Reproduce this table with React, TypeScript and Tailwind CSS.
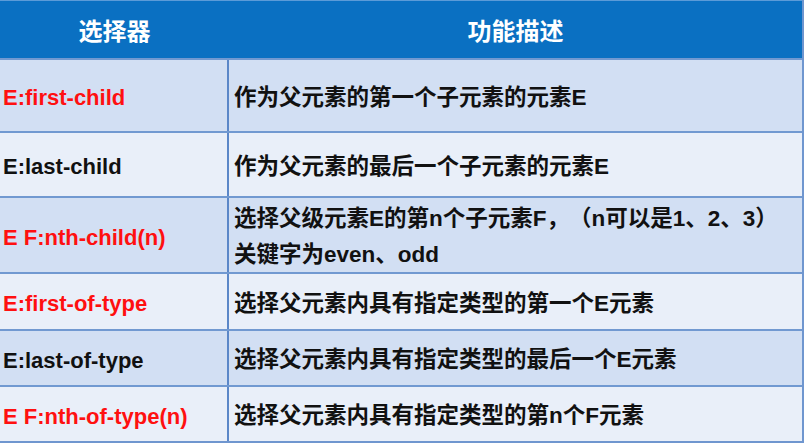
import React from 'react';

type Row = {
  selector: string;
  red: boolean;
  desc: React.ReactNode;
  h: string;
  bg: string;
};

const rows: Row[] = [
  { selector: 'E:first-child', red: true, desc: '作为父元素的第一个子元素的元素E', h: 'h-[73px]', bg: 'bg-[#d2dff3]' },
  { selector: 'E:last-child', red: false, desc: '作为父元素的最后一个子元素的元素E', h: 'h-[65px]', bg: 'bg-[#e9eff9]' },
  {
    selector: 'E F:nth-child(n)',
    red: true,
    desc: (
      <>
        <span className="block whitespace-nowrap">选择父级元素E的第n个子元素F，（n可以是1、2、3）</span>
        <span className="block whitespace-nowrap">关键字为even、odd</span>
      </>
    ),
    h: 'h-[76px]',
    bg: 'bg-[#d2dff3]',
  },
  { selector: 'E:first-of-type', red: true, desc: '选择父元素内具有指定类型的第一个E元素', h: 'h-[57px]', bg: 'bg-[#e9eff9]' },
  { selector: 'E:last-of-type', red: false, desc: '选择父元素内具有指定类型的最后一个E元素', h: 'h-[56px]', bg: 'bg-[#d2dff3]' },
  { selector: 'E F:nth-of-type(n)', red: true, desc: '选择父元素内具有指定类型的第n个F元素', h: 'h-[56px]', bg: 'bg-[#e9eff9]' },
];

export default function App() {
  return (
    <div
      className="w-[808px] h-[443px] bg-white overflow-hidden font-bold [text-spacing-trim:space-all]"
      style={{ fontFamily: '"Liberation Sans", "Noto Sans CJK SC", sans-serif' }}
    >
      <div className="w-[804px] border-r-2 border-b-2 border-[#6f96cf]">
        {/* header */}
        <div className="flex h-[58px] bg-[#0a70c2] border-t border-[#5b9bd8] text-white text-[24px]">
          <div className="w-[229px] flex items-center justify-center pt-1">选择器</div>
          <div className="flex-1 flex items-center justify-center pt-1">功能描述</div>
        </div>

        {rows.map((r) => (
          <div key={r.selector} className={`flex ${r.h} ${r.bg} border-t-2 border-[#7199d1]`}>
            <div
              className={`w-[229px] shrink-0 flex items-center pl-[3px] pt-1 text-[22px] border-r-2 border-[#5b87c8] ${
                r.red ? 'text-[#ff1010]' : 'text-[#111111]'
              }`}
            >
              {r.selector}
            </div>
            <div className="flex-1 flex flex-col justify-center pl-[5px] pt-1 text-[22.5px] leading-[36px] text-[#111111]">
              {typeof r.desc === 'string' ? <span className="whitespace-nowrap">{r.desc}</span> : r.desc}
            </div>
          </div>
        ))}
      </div>
    </div>
  );
}
